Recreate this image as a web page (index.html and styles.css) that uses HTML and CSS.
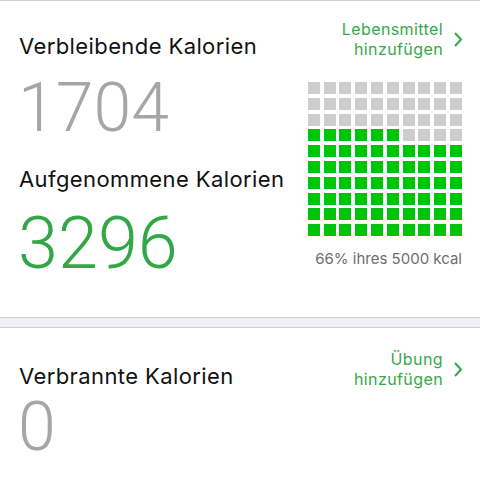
FILE: index.html
```html
<!DOCTYPE html>
<html lang="de">
<head>
    <meta charset="UTF-8">
    <title>Kalorien</title>
    <link rel="stylesheet" href="styles.css">
</head>
<body>

    <div class="card card-first">
        <div class="head">
            <h2 class="title">Verbleibende Kalorien</h2>
            <a class="add">
                <span>Lebensmittel<br>hinzufügen</span>
                <svg class="chev" width="8" height="15" viewBox="0 0 8 15"><path d="M1 1l6 6.5L1 14"/></svg>
            </a>
        </div>
        <div class="summary">
            <div class="numbers">
                <div class="num num-left">1704</div>
                <h2 class="title title-eaten">Aufgenommene Kalorien</h2>
                <div class="num num-eaten">3296</div>
            </div>
            <div class="chart">
                <div class="grid">
                    <i></i><i></i><i></i><i></i><i></i><i></i><i></i><i></i><i></i><i></i>
                    <i></i><i></i><i></i><i></i><i></i><i></i><i></i><i></i><i></i><i></i>
                    <i></i><i></i><i></i><i></i><i></i><i></i><i></i><i></i><i></i><i></i>
                    <i class="on"></i><i class="on"></i><i class="on"></i><i class="on"></i><i class="on"></i><i class="on"></i><i></i><i></i><i></i><i></i>
                    <i class="on"></i><i class="on"></i><i class="on"></i><i class="on"></i><i class="on"></i><i class="on"></i><i class="on"></i><i class="on"></i><i class="on"></i><i class="on"></i>
                    <i class="on"></i><i class="on"></i><i class="on"></i><i class="on"></i><i class="on"></i><i class="on"></i><i class="on"></i><i class="on"></i><i class="on"></i><i class="on"></i>
                    <i class="on"></i><i class="on"></i><i class="on"></i><i class="on"></i><i class="on"></i><i class="on"></i><i class="on"></i><i class="on"></i><i class="on"></i><i class="on"></i>
                    <i class="on"></i><i class="on"></i><i class="on"></i><i class="on"></i><i class="on"></i><i class="on"></i><i class="on"></i><i class="on"></i><i class="on"></i><i class="on"></i>
                    <i class="on"></i><i class="on"></i><i class="on"></i><i class="on"></i><i class="on"></i><i class="on"></i><i class="on"></i><i class="on"></i><i class="on"></i><i class="on"></i>
                    <i class="on"></i><i class="on"></i><i class="on"></i><i class="on"></i><i class="on"></i><i class="on"></i><i class="on"></i><i class="on"></i><i class="on"></i><i class="on"></i>
                </div>
                <div class="chart-note">66% ihres 5000 kcal</div>
            </div>
        </div>
    </div>

    <div class="divider"></div>

    <div class="card card-burned">
        <div class="head">
            <h2 class="title">Verbrannte Kalorien</h2>
            <a class="add">
                <span>Übung<br>hinzufügen</span>
                <svg class="chev" width="8" height="15" viewBox="0 0 8 15"><path d="M1 1l6 6.5L1 14"/></svg>
            </a>
        </div>
        <div class="num num-burned">0</div>
    </div>

</body>
</html>
```

FILE: styles.css
```css
*{
    margin: 0;
    padding: 0;
}
body{
    background-color: #fff;
    font-family: Inter, "Liberation Sans", Arial, sans-serif;
    color: #111;
    border-top: 1px solid #cfcfd3;
}
.card{
    padding: 18px 18px 37px 18px;
}
.card-burned{
    padding-top: 21px;
}
.head{
    display: flex;
    justify-content: space-between;
    align-items: flex-end;
}
.title{
    font-size: 22px;
    line-height: 26px;
    font-weight: 400;
    letter-spacing: 0.4px;
    padding-left: 1px;
}
.add{
    display: flex;
    align-items: center;
    gap: 11px;
    font-size: 16px;
    line-height: 20px;
    letter-spacing: 0.4px;
    color: #36a84b;
    text-align: right;
    cursor: pointer;
}
.chev path{
    fill: none;
    stroke: #36a84b;
    stroke-width: 2;
}
.summary{
    display: flex;
    justify-content: space-between;
}
.num{
    font-family: Roboto, "Liberation Sans", Arial, sans-serif;
    font-size: 68px;
    line-height: 68px;
    font-weight: 300;
    color: #a6a6a6;
}
.num-left{
    margin-top: 15px;
}
.title-eaten{
    margin-top: 24px;
}
.num-eaten{
    margin-top: 16px;
    font-size: 72px;
    line-height: 72px;
    color: #33a748;
}
.num-burned{
    margin-top: 4px;
}
.chart{
    margin-top: 23px;
}
.grid{
    display: grid;
    grid-template-columns: repeat(10, 12px);
    grid-auto-rows: 12px;
    gap: 3.8px;
}
.grid i{
    background-color: #cdcdcd;
}
.grid .on{
    background-color: #00c40c;
}
.chart-note{
    margin-top: 14px;
    font-size: 15px;
    line-height: 18px;
    color: #6e6e6e;
    text-align: right;
}
.divider{
    height: 9px;
    background-color: #efeff4;
    border-top: 1px solid #cfcfd3;
    border-bottom: 1px solid #cfcfd3;
}
```
